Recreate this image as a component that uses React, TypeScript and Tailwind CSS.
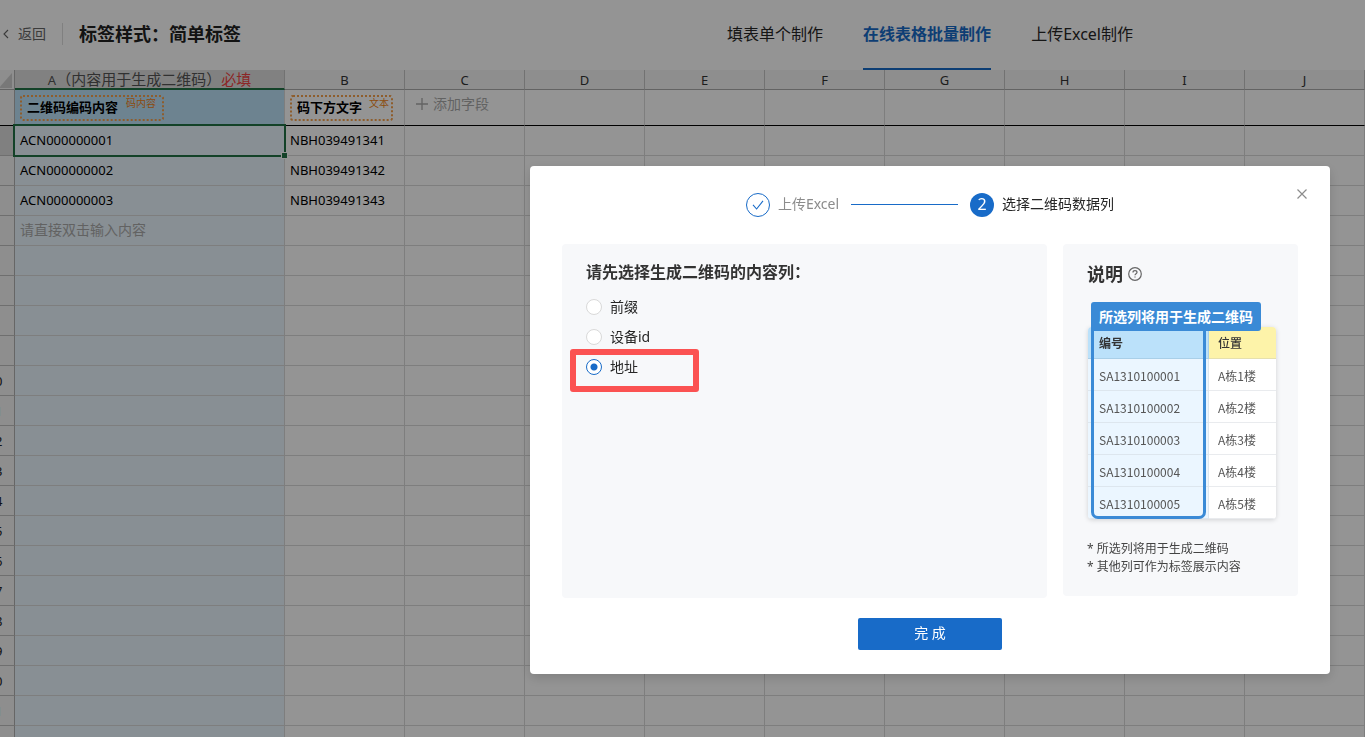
import { useState } from "react";

const columnLetters = ["B", "C", "D", "E", "F", "G", "H", "I", "J"];
const blankColumns = columnLetters.slice(1);

const records = [
  { code: "ACN000000001", label: "NBH039491341" },
  { code: "ACN000000002", label: "NBH039491342" },
  { code: "ACN000000003", label: "NBH039491343" },
];

const rowNumbers = Array.from({ length: 21 }, (_, i) => i + 2);

const tabs = [
  { name: "填表单个制作", active: false },
  { name: "在线表格批量制作", active: true },
  { name: "上传Excel制作", active: false },
];

const sampleRows = [1, 2, 3, 4, 5];

function ChevronLeft() {
  return (
    <svg width="6" height="10" viewBox="0 0 6 10" fill="none" stroke="currentColor" strokeWidth="1.1" aria-hidden="true">
      <path d="M5 1 1 5l4 4" />
    </svg>
  );
}

function Header() {
  return (
    <header className="flex h-[70px] items-center bg-white pb-[2px]">
      <button type="button" className="ml-[3px] flex items-center gap-[9px] text-sm text-[#666]">
        <ChevronLeft />
        返回
      </button>
      <span className="ml-4 h-[22px] w-px bg-[#ddd]" />
      <h1 className="ml-4 text-lg font-bold text-[#222]">标签样式：简单标签</h1>
      <nav className="mr-[232px] -mb-[2px] ml-auto flex h-[70px] gap-10">
        {tabs.map((tab) => (
          <a
            key={tab.name}
            href="#"
            className={
              tab.active
                ? "flex h-full items-center border-b-2 border-[#186bc8] text-base font-bold text-[#186bc8]"
                : "flex h-full items-center border-b-2 border-transparent text-base text-[#262626]"
            }
          >
            {tab.name}
          </a>
        ))}
      </nav>
    </header>
  );
}

const headCell = "h-[20px] border-r border-b border-r-[#c4c4c4] border-b-[#ababab] bg-[#f4f4f4] p-0 text-[13px] leading-4 font-normal text-[#333]";
const fieldCell = "h-[36px] border-r border-b border-r-[#dadada] border-b-black p-0";
const bodyCell = "h-[30px] border-r border-b border-[#dadada] p-0 pb-[2px]";
const rowHead = "h-[30px] border-r border-b border-r-[#b0b0b0] border-b-[#c0c0c0] p-0 pl-[2px] text-[13px] leading-5 font-normal text-[#222]";

function Sheet() {
  return (
    <div className="-ml-[26px]">
      <table className="w-full table-fixed border-separate border-spacing-0 text-[13px] leading-5">
        <colgroup>
          <col className="w-[41px]" />
          <col className="w-[270px]" />
          {columnLetters.map((c) => (
            <col key={c} />
          ))}
        </colgroup>
        <thead>
          <tr>
            <th className="h-[20px] border-r border-b border-r-[#b0b0b0] border-b-[#ababab] bg-[#f4f4f4] p-0">
              <svg width="13" height="16" viewBox="0 0 13 16" className="mr-[2px] ml-auto block" aria-hidden="true">
                <path d="M13 1v15H0z" fill="#cfcfcf" />
              </svg>
            </th>
            <th className="h-[20px] border-r border-b-2 border-r-[#c4c4c4] border-b-[#217346] bg-[#dfdfdf] p-0 text-[15px] leading-4 font-normal whitespace-nowrap text-[#555]">
              <span className="text-[13px]">A</span>（内容用于生成二维码）<span className="text-[#f04444]">必填</span>
            </th>
            {columnLetters.map((c) => (
              <th key={c} className={headCell}>
                {c}
              </th>
            ))}
          </tr>
        </thead>
        <tbody>
          <tr>
            <th className="h-[36px] border-r border-b border-r-[#b0b0b0] border-b-black bg-[#f4f4f4] p-0 text-[13px] font-normal">1</th>
            <td className={`${fieldCell} bg-[#bce2f9]`}>
              <div className="ml-[5px] flex h-[26px] w-[144px] items-start gap-2 rounded-[3px] border-2 border-dotted border-[#f5a04c] pl-[5px] whitespace-nowrap">
                <b className="leading-5">二维码编码内容</b>
                <span className="text-[10px] leading-3 text-[#f08418]">码内容</span>
              </div>
            </td>
            <td className={fieldCell}>
              <div className="ml-[5px] flex h-[26px] w-[103px] items-start gap-[7px] rounded-[3px] border-2 border-dotted border-[#f5a04c] pl-[5px] whitespace-nowrap">
                <b className="leading-5">码下方文字</b>
                <span className="text-[10px] leading-3 text-[#f08418]">文本</span>
              </div>
            </td>
            <td className={`${fieldCell} align-top`}>
              <button type="button" className="mt-[3px] ml-[11px] flex items-center gap-[5px] text-sm leading-[22px] text-[#aaa]">
                <svg width="12" height="12" viewBox="0 0 12 12" stroke="currentColor" strokeWidth="1.3" aria-hidden="true">
                  <path d="M6 0v12M0 6h12" />
                </svg>
                添加字段
              </button>
            </td>
            {blankColumns.slice(1).map((c) => (
              <td key={c} className={fieldCell} />
            ))}
          </tr>
          {rowNumbers.map((n, i) => (
            <tr key={n}>
              <th className={i === 0 ? `${rowHead} bg-[#dcdcdc]` : `${rowHead} bg-[#f4f4f4]`}>{n}</th>
              <td className={`${bodyCell} relative bg-[#ebf6ff] pl-[5px]`}>
                {records[i]?.code}
                {i === records.length && <span className="text-sm leading-5 text-[#aaa]">请直接双击输入内容</span>}
                {i === 0 && (
                  <span className="absolute -inset-[2px] z-10 border-2 border-[#217346]">
                    <span className="absolute -right-[4px] -bottom-[4px] size-[7px] border border-white bg-[#217346]" />
                  </span>
                )}
              </td>
              <td className={`${bodyCell} pl-[5px]`}>{records[i]?.label}</td>
              {blankColumns.map((c) => (
                <td key={c} className={bodyCell} />
              ))}
            </tr>
          ))}
        </tbody>
      </table>
    </div>
  );
}

function Steps() {
  return (
    <ol className="flex items-center justify-center text-sm leading-[22px]">
      <li className="flex items-center gap-2 text-[#8c8c8c]">
        <span className="flex size-6 items-center justify-center rounded-full border border-[#186bc8] text-[#186bc8]">
          <svg width="12" height="10" viewBox="0 0 12 10" fill="none" stroke="currentColor" strokeWidth="1.1" aria-hidden="true">
            <path d="M1 4.800 4.600 9 11 .8" />
          </svg>
        </span>
        <span className="pb-[2px]">上传Excel</span>
      </li>
      <li className="mx-3 mb-[2px] h-px w-[107px] bg-[#186bc8]" aria-hidden="true" />
      <li className="flex items-center gap-2 text-[#262626]">
        <span className="flex size-6 items-center justify-center rounded-full bg-[#186bc8] pb-[2px] text-base leading-[22px] text-white">2</span>
        <span className="pb-[2px]">选择二维码数据列</span>
      </li>
    </ol>
  );
}

function ColumnPicker() {
  const [selected, setSelected] = useState("地址");
  return (
    <fieldset className="h-[354px] flex-1 rounded bg-[#f7f8fa] px-6 pt-4">
      <h2 className="text-base leading-6 font-bold text-[#333]">请先选择生成二维码的内容列：</h2>
      <div className="mt-2">
        {["前缀", "设备id", "地址"].map((name) => (
          <div key={name} className="relative flex h-[30px] items-center">
            <label className="flex items-center gap-2 text-sm leading-[22px] text-[#262626]">
              <input
                type="radio"
                name="column"
                checked={selected === name}
                onChange={() => setSelected(name)}
                className="size-4 appearance-none rounded-full border border-[#d9d9d9] bg-white checked:border-[#186bc8] checked:bg-[radial-gradient(circle,#186bc8_0,#186bc8_3px,white_4px)]"
              />
              {name}
            </label>
            {name === "地址" && (
              <span className="pointer-events-none absolute -top-[3px] -left-4 h-[43px] w-[129px] rounded-[3px] border-[6px] border-[#fb5252]" />
            )}
          </div>
        ))}
      </div>
    </fieldset>
  );
}

function Explanation() {
  return (
    <aside className="h-[352px] w-[235px] rounded bg-[#f7f8fa] px-6 pt-4">
      <h2 className="flex items-center gap-[5px] text-lg leading-7 font-bold text-[#333]">
        说明
        <svg width="14" height="14" viewBox="0 0 14 14" fill="none" stroke="#666" strokeWidth="1.2" aria-hidden="true">
          <circle cx="7" cy="7" r="6.3" />
          <path d="M5 5.500C5 4.300 5.800 3.700 7 3.700s2 .7 2 1.700c0 1.200-2 1.400-2 2.900M7 9.400v1.200" />
        </svg>
      </h2>
      <div className="relative mt-[39px] ml-px w-[188px] font-['Noto_Sans_CJK_SC',sans-serif]">
        <table className="w-full table-fixed border-separate border-spacing-0 overflow-hidden rounded text-left text-xs leading-5 text-[#555] shadow-[0_1px_5px_rgba(0,0,0,0.16)]">
          <colgroup>
            <col className="w-[121px]" />
            <col />
          </colgroup>
          <thead>
            <tr className="text-[#333]">
              <th className="h-8 border-r border-b border-[#a9cfe8] bg-[#bbe1fa] p-0 pt-px pl-[11px] font-bold">编号</th>
              <th className="h-8 border-b border-[#e6e0ae] bg-[#fdf3a9] p-0 pt-px pl-[9px] font-medium">位置</th>
            </tr>
          </thead>
          <tbody>
            {sampleRows.map((n) => (
              <tr key={n}>
                <td className="h-8 border-r border-b border-[#dde6ee] bg-[#ebf6ff] p-0 pt-[2px] pl-[11px]">SA131010000{n}</td>
                <td className="h-8 border-b border-[#e9ebee] bg-white p-0 pt-[2px] pl-[9px]">A栋{n}楼</td>
              </tr>
            ))}
          </tbody>
        </table>
        <span className="absolute top-0 bottom-0 left-[3px] w-[115px] rounded-b-[7px] border-[3px] border-[#3a8ad6]" />
        <strong className="absolute -top-[25px] left-[3px] rounded-[3px] bg-[#3a8ad6] px-2 text-sm leading-[29px] whitespace-nowrap text-white">
          所选列将用于生成二维码
        </strong>
      </div>
      <ul className="mt-[21px] text-xs leading-[18px] text-[#444]">
        {["所选列将用于生成二维码", "其他列可作为标签展示内容"].map((note) => (
          <li key={note}>* {note}</li>
        ))}
      </ul>
    </aside>
  );
}

function UploadDialog() {
  return (
    <div className="fixed inset-0 z-20 flex items-start justify-end bg-black/42 pt-[166px] pr-[35px]">
      <section
        role="dialog"
        aria-label="选择二维码数据列"
        className="relative w-full max-w-[800px] rounded bg-white px-8 pt-[27px] pb-6 shadow-[0_4px_12px_rgba(0,0,0,0.15)]"
      >
        <button type="button" aria-label="关闭" className="absolute top-[23px] right-[23px] text-[#8c8c8c]">
          <svg width="10" height="10" viewBox="0 0 10 10" stroke="currentColor" strokeWidth="1.2" aria-hidden="true">
            <path d="M.5.5l9 9M9.5.5l-9 9" />
          </svg>
        </button>
        <Steps />
        <div className="mt-[27px] flex items-start gap-4">
          <ColumnPicker />
          <Explanation />
        </div>
        <div className="mt-5 flex justify-center">
          <button type="button" className="h-8 w-36 rounded-xs bg-[#186bc8] pb-[2px] text-sm text-white">
            完 成
          </button>
        </div>
      </section>
    </div>
  );
}

export default function App() {
  return (
    <div className="h-screen overflow-hidden bg-white font-['Noto_Sans','Noto_Sans_CJK_SC',sans-serif] text-black">
      <Header />
      <Sheet />
      <UploadDialog />
    </div>
  );
}
